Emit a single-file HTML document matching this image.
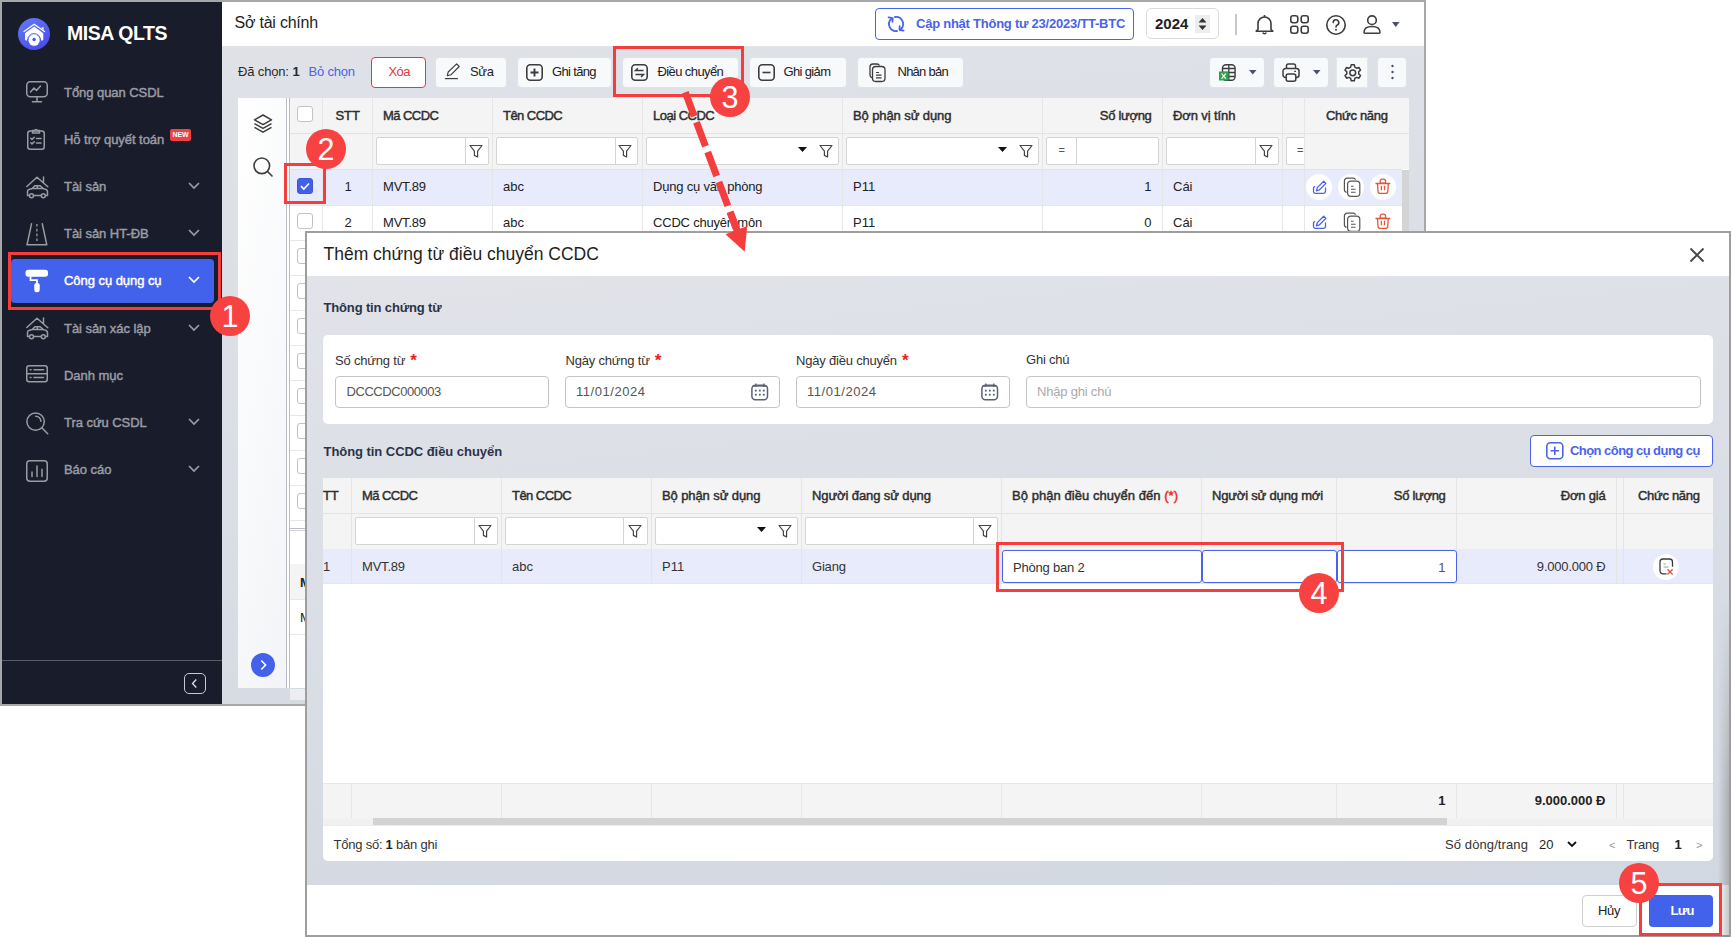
<!DOCTYPE html>
<html><head><meta charset="utf-8">
<style>
*{box-sizing:border-box;margin:0;padding:0}
html,body{width:1731px;height:937px;overflow:hidden;background:#fff;font-family:"Liberation Sans",sans-serif;color:#222}
.a{position:absolute;white-space:nowrap}
svg{position:absolute;overflow:visible}
</style></head><body>
<div class="a" style="left:0px;top:0px;width:1426px;height:706px;border:2px solid #a7a7a7;background:linear-gradient(176deg,#e0e2e8 0%,#d6dbe3 100%)"></div>
<div class="a" style="left:2px;top:2px;width:220px;height:702px;background:#191c2a"></div>
<div class="a" style="left:18px;top:18px;width:32px;height:32px;border-radius:50%;background:linear-gradient(150deg,#627df3 0%,#4844ee 100%)"></div>
<svg style="left:18px;top:18px" width="32" height="32" viewBox="0 0 32 32">
 <path d="M6 13.5 L16.2 6.3 L26.5 13.5" stroke="#fff" stroke-width="1.3" fill="none" stroke-linecap="round"/>
 <path d="M23.2 9.8 L25.3 9 L25.8 12.3Z" fill="#fff"/>
 <path d="M7 15.3 L16.2 8.6 L25.3 15.3 V22 L23.5 22.8 L22.5 20.8 A6.8 6.8 0 0 0 9.8 20.8 L8.6 22.8 L7 22Z" fill="#fff"/>
 <circle cx="16.1" cy="22" r="6.5" fill="none" stroke="#5260f0" stroke-width="0.9"/>
 <circle cx="16.1" cy="22.2" r="5.6" fill="#fff"/>
 <circle cx="16.1" cy="21.5" r="1.7" fill="#4e59f0"/>
</svg>
<div class="a" style="left:67px;top:24.49px;font-size:19.5px;line-height:19.5px;font-weight:700;color:#fff;letter-spacing:-0.45px;">MISA QLTS</div>
<div class="a" style="left:11px;top:259px;width:203px;height:44px;border-radius:4px;background:#4362ec"></div>
<div class="a" style="left:64px;top:86.00px;font-size:13px;line-height:13px;font-weight:400;color:#9a9ca4;letter-spacing:-0.05px;-webkit-text-stroke:0.45px #9a9ca4;">Tổng quan CSDL</div>
<div class="a" style="left:64px;top:133.00px;font-size:13px;line-height:13px;font-weight:400;color:#9a9ca4;letter-spacing:-0.05px;-webkit-text-stroke:0.45px #9a9ca4;">Hỗ trợ quyết toán</div>
<div class="a" style="left:64px;top:180.00px;font-size:13px;line-height:13px;font-weight:400;color:#9a9ca4;letter-spacing:-0.05px;-webkit-text-stroke:0.45px #9a9ca4;">Tài sản</div>
<svg style="left:188px;top:182px" width="12" height="7" viewBox="0 0 12 7"><path d="M1 1 L6 6 L11 1" stroke="#9a9ca4" stroke-width="1.7" fill="none"/></svg>
<div class="a" style="left:64px;top:227.00px;font-size:13px;line-height:13px;font-weight:400;color:#9a9ca4;letter-spacing:-0.05px;-webkit-text-stroke:0.45px #9a9ca4;">Tài sản HT-ĐB</div>
<svg style="left:188px;top:229px" width="12" height="7" viewBox="0 0 12 7"><path d="M1 1 L6 6 L11 1" stroke="#9a9ca4" stroke-width="1.7" fill="none"/></svg>
<div class="a" style="left:64px;top:274.00px;font-size:13px;line-height:13px;font-weight:400;color:#fff;letter-spacing:-0.05px;-webkit-text-stroke:0.45px #fff;">Công cụ dụng cụ</div>
<svg style="left:188px;top:276px" width="12" height="7" viewBox="0 0 12 7"><path d="M1 1 L6 6 L11 1" stroke="#fff" stroke-width="1.7" fill="none"/></svg>
<div class="a" style="left:64px;top:322.00px;font-size:13px;line-height:13px;font-weight:400;color:#9a9ca4;letter-spacing:-0.05px;-webkit-text-stroke:0.45px #9a9ca4;">Tài sản xác lập</div>
<svg style="left:188px;top:324px" width="12" height="7" viewBox="0 0 12 7"><path d="M1 1 L6 6 L11 1" stroke="#9a9ca4" stroke-width="1.7" fill="none"/></svg>
<div class="a" style="left:64px;top:369.00px;font-size:13px;line-height:13px;font-weight:400;color:#9a9ca4;letter-spacing:-0.05px;-webkit-text-stroke:0.45px #9a9ca4;">Danh mục</div>
<div class="a" style="left:64px;top:416.00px;font-size:13px;line-height:13px;font-weight:400;color:#9a9ca4;letter-spacing:-0.05px;-webkit-text-stroke:0.45px #9a9ca4;">Tra cứu CSDL</div>
<svg style="left:188px;top:418px" width="12" height="7" viewBox="0 0 12 7"><path d="M1 1 L6 6 L11 1" stroke="#9a9ca4" stroke-width="1.7" fill="none"/></svg>
<div class="a" style="left:64px;top:463.00px;font-size:13px;line-height:13px;font-weight:400;color:#9a9ca4;letter-spacing:-0.05px;-webkit-text-stroke:0.45px #9a9ca4;">Báo cáo</div>
<svg style="left:188px;top:465px" width="12" height="7" viewBox="0 0 12 7"><path d="M1 1 L6 6 L11 1" stroke="#9a9ca4" stroke-width="1.7" fill="none"/></svg>
<div class="a" style="left:170px;top:129px;width:21px;height:12px;background:#ec4242;border-radius:2px"></div>
<div class="a" style="left:172.5px;top:131.37px;font-size:7px;line-height:7px;font-weight:700;color:#fff;letter-spacing:-0.1px;">NEW</div>
<svg style="left:26px;top:81px" width="22" height="22" viewBox="0 0 22 22"><rect x="0.75" y="0.75" width="20.5" height="15" rx="3.5" stroke="#9a9ca4" stroke-width="1.5" fill="none" stroke-linecap="round" stroke-linejoin="round"/><path d="M11 16 V20.5 M6.5 20.8 H15.5" stroke="#9a9ca4" stroke-width="1.5" fill="none" stroke-linecap="round" stroke-linejoin="round"/><path d="M4.5 11 L8 7 L10.5 9.5 L14.5 5" stroke="#9a9ca4" stroke-width="1.5" fill="none" stroke-linecap="round" stroke-linejoin="round"/></svg>
<svg style="left:27px;top:128px" width="18" height="22" viewBox="0 0 18 22"><rect x="0.75" y="3" width="16.5" height="18.2" rx="2.5" stroke="#9a9ca4" stroke-width="1.5" fill="none" stroke-linecap="round" stroke-linejoin="round"/><path d="M5.5 5 V2.5 H7.5 A1.6 1.6 0 0 1 10.5 2.5 H12.5 V5 Z" stroke="#9a9ca4" stroke-width="1.5" fill="none" stroke-linecap="round" stroke-linejoin="round"/><path d="M3.8 10.2 L5 11.4 L7.3 9.2 M3.8 14.7 L5 15.9 L7.3 13.7 M9.5 10.5 H14 M9.5 15 H14" stroke="#9a9ca4" stroke-width="1.5" fill="none" stroke-linecap="round" stroke-linejoin="round"/></svg>
<svg style="left:25.5px;top:175.5px" width="23" height="23" viewBox="0 0 23 23"><path d="M0.8 10.5 L11 1.2 L21.8 10.8 M17.5 1 V7" stroke="#9a9ca4" stroke-width="1.5" fill="none" stroke-linecap="round" stroke-linejoin="round"/><path d="M3 19.5 H1.5 V15.5 Q1.5 13.8 3.5 13.3 L6.2 12.5 L8.8 9.8 H14.2 L17.5 12.8 Q21.5 13.3 21.5 15.8 V19.5 H19.8 M7.8 19.5 H15 M6.2 12.5 H17.5 M11.3 9.8 V12.5" stroke="#9a9ca4" stroke-width="1.5" fill="none" stroke-linecap="round" stroke-linejoin="round"/><circle cx="5.5" cy="19.8" r="2" stroke="#9a9ca4" stroke-width="1.5" fill="none" stroke-linecap="round" stroke-linejoin="round"/><circle cx="17.3" cy="19.8" r="2" stroke="#9a9ca4" stroke-width="1.5" fill="none" stroke-linecap="round" stroke-linejoin="round"/></svg>
<svg style="left:26px;top:223px" width="22" height="23" viewBox="0 0 22 23"><path d="M5.5 0.8 L1 21.8 H20.8 L16.3 0.8" stroke="#9a9ca4" stroke-width="1.5" fill="none" stroke-linecap="round" stroke-linejoin="round"/><path d="M10.9 1 V20" stroke="#9a9ca4" stroke-width="1.3" stroke-dasharray="2.6 2.2"/></svg>
<svg style="left:25px;top:269px" width="24" height="24" viewBox="0 0 24 24"><rect x="0.5" y="0.8" width="22.5" height="7" rx="2.8" fill="#fff"/><path d="M5.5 7.5 V11.2 H12 V15" stroke="#fff" stroke-width="1.8" fill="none"/><rect x="9.3" y="14" width="5.4" height="9.2" rx="2.2" fill="#fff"/></svg>
<svg style="left:25.5px;top:317px" width="23" height="23" viewBox="0 0 23 23"><path d="M0.8 10.5 L11 1.2 L21.8 10.8 M17.5 1 V7" stroke="#9a9ca4" stroke-width="1.5" fill="none" stroke-linecap="round" stroke-linejoin="round"/><path d="M3 19.5 H1.5 V15.5 Q1.5 13.8 3.5 13.3 L6.2 12.5 L8.8 9.8 H14.2 L17.5 12.8 Q21.5 13.3 21.5 15.8 V19.5 H19.8 M7.8 19.5 H15 M6.2 12.5 H17.5 M11.3 9.8 V12.5" stroke="#9a9ca4" stroke-width="1.5" fill="none" stroke-linecap="round" stroke-linejoin="round"/><circle cx="5.5" cy="19.8" r="2" stroke="#9a9ca4" stroke-width="1.5" fill="none" stroke-linecap="round" stroke-linejoin="round"/><circle cx="17.3" cy="19.8" r="2" stroke="#9a9ca4" stroke-width="1.5" fill="none" stroke-linecap="round" stroke-linejoin="round"/></svg>
<svg style="left:26px;top:365px" width="22" height="18" viewBox="0 0 22 18"><rect x="0.75" y="0.75" width="20.5" height="16" rx="2.5" stroke="#9a9ca4" stroke-width="1.5" fill="none" stroke-linecap="round" stroke-linejoin="round"/><path d="M0.8 8.7 H21.2 M4.2 4.8 H5 M8 4.8 H17.5 M4.2 12.6 H5 M8 12.6 H17.5" stroke="#9a9ca4" stroke-width="1.5" fill="none" stroke-linecap="round" stroke-linejoin="round"/></svg>
<svg style="left:26px;top:412px" width="23" height="23" viewBox="0 0 23 23"><circle cx="9.6" cy="9.6" r="8.7" stroke="#9a9ca4" stroke-width="1.5" fill="none" stroke-linecap="round" stroke-linejoin="round"/><path d="M15.8 15.8 L21.7 21.7" stroke="#9a9ca4" stroke-width="1.5" fill="none" stroke-linecap="round" stroke-linejoin="round"/><path d="M9.8 4.3 A5.3 5.3 0 0 1 14.9 9.3" stroke="#9a9ca4" stroke-width="1.5" fill="none" stroke-linecap="round" stroke-linejoin="round"/></svg>
<svg style="left:26px;top:460px" width="22" height="22" viewBox="0 0 22 22"><rect x="0.75" y="0.75" width="20.5" height="20.5" rx="3.2" stroke="#9a9ca4" stroke-width="1.5" fill="none" stroke-linecap="round" stroke-linejoin="round"/><path d="M6 16.5 V12 M11 16.5 V6 M16 16.5 V9.2" stroke="#9a9ca4" stroke-width="1.5" fill="none" stroke-linecap="round" stroke-linejoin="round"/></svg>
<div class="a" style="left:2px;top:660px;width:220px;height:1px;background:#5a5d68"></div>
<div class="a" style="left:184px;top:673px;width:22px;height:21px;border:1.5px solid #c9cad0;border-radius:5px"></div>
<svg style="left:184px;top:673px" width="22" height="21" viewBox="0 0 22 21"><path d="M12.3 6.5 L8.5 10.5 L12.3 14.5" stroke="#e4e4e8" stroke-width="1.3" fill="none"/></svg>
<div class="a" style="left:222px;top:2px;width:1202px;height:44px;background:#fff"></div>
<div class="a" style="left:234.5px;top:15.26px;font-size:16px;line-height:16px;font-weight:400;color:#1e1e1e;letter-spacing:-0.22px;">Sở tài chính</div>
<div class="a" style="left:875px;top:8px;width:259px;height:32px;border:1px solid #4a63ea;border-radius:4px;background:#fff"></div>
<svg style="left:882px;top:12px" width="28" height="24" viewBox="0 0 28 24"><path d="M15 19 A7 7 0 0 1 9.2 7" stroke="#4a63ea" stroke-width="1.8" fill="none" stroke-linecap="round"/><path d="M6.6 5.4 L10.7 6.2 L10.5 9.8" stroke="#4a63ea" stroke-width="1.8" fill="none" stroke-linecap="round" stroke-linejoin="round"/><path d="M13 5 A7 7 0 0 1 18.9 17" stroke="#4a63ea" stroke-width="1.8" fill="none" stroke-linecap="round"/><path d="M21.6 18.6 L17.6 18 L17.6 14.2" stroke="#4a63ea" stroke-width="1.8" fill="none" stroke-linecap="round" stroke-linejoin="round"/></svg>
<div class="a" style="left:916px;top:17.00px;font-size:13px;line-height:13px;font-weight:700;color:#4a63ea;letter-spacing:-0.24px;">Cập nhật Thông tư 23/2023/TT-BTC</div>
<div class="a" style="left:1146px;top:8px;width:73px;height:31px;border:1px solid #d9dbe0;border-radius:5px;background:#fff"></div>
<div class="a" style="left:1155px;top:16.30px;font-size:15px;line-height:15px;font-weight:700;color:#1e1e1e;">2024</div>
<div class="a" style="left:1195px;top:15px;width:15px;height:18px;background:#ededed"></div>
<svg style="left:1195px;top:15px" width="15" height="18" viewBox="0 0 15 18"><path d="M3.5 7.5 L7.5 3 L11.5 7.5Z M3.5 10.5 L7.5 15 L11.5 10.5Z" fill="#333"/></svg>
<div class="a" style="left:1235px;top:14px;width:1.5px;height:21px;background:#c8c8c8"></div>
<svg style="left:1255px;top:14px" width="19" height="21" viewBox="0 0 19 21"><path d="M3 15.5 V9.5 A6.5 6.5 0 0 1 16 9.5 V15.5 L17.8 17.2 H1.2 Z" stroke="#3d3d3d" stroke-width="1.6" fill="none" stroke-linejoin="round"/><path d="M7.8 18.5 A1.8 1.8 0 0 0 11.2 18.5" stroke="#3d3d3d" stroke-width="1.6" fill="none"/><path d="M9.5 1 V3" stroke="#3d3d3d" stroke-width="1.6"/></svg>
<svg style="left:1290px;top:15px" width="19" height="19" viewBox="0 0 19 19"><rect x="0.8" y="0.8" width="7" height="7" rx="2.2" stroke="#3d3d3d" stroke-width="1.6" fill="none"/><rect x="11.2" y="0.8" width="7" height="7" rx="2.2" stroke="#3d3d3d" stroke-width="1.6" fill="none"/><rect x="0.8" y="11.2" width="7" height="7" rx="2.2" stroke="#3d3d3d" stroke-width="1.6" fill="none"/><rect x="11.2" y="11.2" width="7" height="7" rx="2.2" stroke="#3d3d3d" stroke-width="1.6" fill="none"/></svg>
<svg style="left:1326px;top:14.5px" width="20" height="20" viewBox="0 0 20 20"><circle cx="10" cy="10" r="9.2" stroke="#3d3d3d" stroke-width="1.6" fill="none"/><path d="M7.2 7.6 A2.8 2.8 0 1 1 11 10.2 Q10 10.7 10 12" stroke="#3d3d3d" stroke-width="1.6" fill="none" stroke-linecap="round"/><circle cx="10" cy="14.8" r="1" fill="#3d3d3d"/></svg>
<svg style="left:1363px;top:15px" width="18" height="19" viewBox="0 0 18 19"><circle cx="9" cy="5.2" r="4.3" stroke="#3d3d3d" stroke-width="1.6" fill="none"/><path d="M1 17.2 Q1 11.5 9 11.5 Q17 11.5 17 17.2 Q17 18.2 16 18.2 H2 Q1 18.2 1 17.2Z" stroke="#3d3d3d" stroke-width="1.6" fill="none"/></svg>
<svg style="left:1392px;top:21.5px" width="8" height="5" viewBox="0 0 8 5"><path d="M0 0 H7.5 L3.75 5Z" fill="#4a5070"/></svg>
<div class="a" style="left:238px;top:65.00px;font-size:13px;line-height:13px;font-weight:400;color:#2a2a2a;letter-spacing:-0.15px;">Đã chọn: </div>
<div class="a" style="left:292.5px;top:65.00px;font-size:13px;line-height:13px;font-weight:700;color:#2a2a2a;">1</div>
<div class="a" style="left:308.5px;top:65.00px;font-size:13px;line-height:13px;font-weight:400;color:#4a63ea;letter-spacing:-0.2px;">Bỏ chọn</div>
<div class="a" style="left:371px;top:57px;width:55px;height:31px;border-radius:4px;background:#fff;border:1px solid #e33b3b"></div>
<div class="a" style="left:388.5px;top:65.00px;font-size:13px;line-height:13px;font-weight:400;color:#e03a3a;letter-spacing:-0.6px;">Xóa</div>
<div class="a" style="left:435px;top:57px;width:72px;height:31px;border-radius:4px;background:#f8f9fb;border:1px solid #dfe2e7"></div>
<svg style="left:440px;top:58px" width="24" height="24" viewBox="0 0 24 24"><path d="M7.3 17.7 L8.2 14 L16.6 5.9 L19.2 8.5 L10.9 16.8 Z" stroke="#3d3d3d" stroke-width="1.15" fill="none" stroke-linejoin="round"/><path d="M4.9 20.6 H17.9" stroke="#3d3d3d" stroke-width="1.2"/></svg>
<div class="a" style="left:470px;top:65.00px;font-size:13px;line-height:13px;font-weight:400;color:#222;letter-spacing:-0.3px;">Sửa</div>
<div class="a" style="left:517px;top:57px;width:95px;height:31px;border-radius:4px;background:#f8f9fb;border:1px solid #dfe2e7"></div>
<svg style="left:525.5px;top:63.5px" width="17" height="17" viewBox="0 0 17 17"><rect x="0.8" y="0.8" width="15.4" height="15.4" rx="3.5" stroke="#3d3d3d" stroke-width="1.6" fill="none"/><path d="M8.5 4.5 V12.5 M4.5 8.5 H12.5" stroke="#3d3d3d" stroke-width="1.9"/></svg>
<div class="a" style="left:552px;top:65.00px;font-size:13px;line-height:13px;font-weight:400;color:#222;letter-spacing:-0.65px;">Ghi tăng</div>
<div class="a" style="left:622px;top:57px;width:117px;height:31px;border-radius:4px;background:#f8f9fb;border:1px solid #dfe2e7"></div>
<svg style="left:631px;top:63.5px" width="17" height="17" viewBox="0 0 17 17"><rect x="0.8" y="0.8" width="15.4" height="15.4" rx="3.5" stroke="#3d3d3d" stroke-width="1.6" fill="none"/><path d="M12.5 6.6 H4.5 L6.9 4.2 M4.5 10.6 H12.5 L10.1 13" stroke="#3d3d3d" stroke-width="1.5" fill="none"/></svg>
<div class="a" style="left:657.5px;top:65.00px;font-size:13px;line-height:13px;font-weight:400;color:#222;letter-spacing:-0.6px;">Điều chuyển</div>
<div class="a" style="left:749px;top:57px;width:98px;height:31px;border-radius:4px;background:#f8f9fb;border:1px solid #dfe2e7"></div>
<svg style="left:757.5px;top:63.5px" width="17" height="17" viewBox="0 0 17 17"><rect x="0.8" y="0.8" width="15.4" height="15.4" rx="3.5" stroke="#3d3d3d" stroke-width="1.6" fill="none"/><path d="M4.5 8.5 H12.5" stroke="#3d3d3d" stroke-width="1.6"/></svg>
<div class="a" style="left:783.5px;top:65.00px;font-size:13px;line-height:13px;font-weight:400;color:#222;letter-spacing:-0.65px;">Ghi giảm</div>
<div class="a" style="left:857px;top:57px;width:107px;height:31px;border-radius:4px;background:#f8f9fb;border:1px solid #dfe2e7"></div>
<svg style="left:868.5px;top:62.5px" width="17" height="19" viewBox="0 0 17 19"><path d="M10.5 2.5 A3 3 0 0 0 8 1 H4 A3 3 0 0 0 1 4 V12 A3 3 0 0 0 3 14.8" stroke="#3d3d3d" stroke-width="1.3" fill="none"/><rect x="3.5" y="3.5" width="12.5" height="15" rx="3.2" stroke="#3d3d3d" stroke-width="1.3" fill="#f8f9fb"/><path d="M7 9.5 H10 M7 12.2 H12.5 M7 14.9 H12.5" stroke="#3d3d3d" stroke-width="1.2"/></svg>
<div class="a" style="left:897.5px;top:65.00px;font-size:13px;line-height:13px;font-weight:400;color:#222;letter-spacing:-0.75px;">Nhân bản</div>
<div class="a" style="left:1209px;top:57px;width:56px;height:31px;border-radius:4px;background:#f8f9fb;border:1px solid #dfe2e7"></div>
<svg style="left:1219px;top:64px" width="17" height="17" viewBox="0 0 17 17"><rect x="3.5" y="0.7" width="12.6" height="15.6" rx="3.5" stroke="#3d3d3d" stroke-width="1.4" fill="none"/><path d="M3.5 4.5 H16 M3.5 8.5 H16 M3.5 12.5 H16 M9.8 0.8 V16.2" stroke="#3d3d3d" stroke-width="1.3"/><rect x="0" y="7.5" width="9.5" height="9" fill="#2ea44f"/><path d="M2.6 9.6 L6.8 14.6 M6.8 9.6 L2.6 14.6" stroke="#fff" stroke-width="1.2"/></svg>
<svg style="left:1249px;top:70.3px" width="7.5" height="4.5" viewBox="0 0 7.5 4.5"><path d="M0 0 H7.5 L3.75 4.5Z" fill="#4a5070"/></svg>
<div class="a" style="left:1273px;top:57px;width:56px;height:31px;border-radius:4px;background:#f8f9fb;border:1px solid #dfe2e7"></div>
<svg style="left:1282px;top:63px" width="18" height="19" viewBox="0 0 18 19"><path d="M4.5 5.5 V2.8 A1.8 1.8 0 0 1 6.3 1 H11.7 A1.8 1.8 0 0 1 13.5 2.8 V5.5" stroke="#3d3d3d" stroke-width="1.5" fill="none"/><path d="M4 14.5 H3.5 A2.5 2.5 0 0 1 1 12 V8 A2.5 2.5 0 0 1 3.5 5.5 H14.5 A2.5 2.5 0 0 1 17 8 V12 A2.5 2.5 0 0 1 14.5 14.5 H14" stroke="#3d3d3d" stroke-width="1.5" fill="none"/><rect x="4.2" y="11" width="9.6" height="7.2" rx="2" stroke="#3d3d3d" stroke-width="1.5" fill="#f8f9fb"/><path d="M12.3 8.3 H14" stroke="#3d3d3d" stroke-width="1.3"/></svg>
<svg style="left:1313px;top:70.3px" width="7.5" height="4.5" viewBox="0 0 7.5 4.5"><path d="M0 0 H7.5 L3.75 4.5Z" fill="#4a5070"/></svg>
<div class="a" style="left:1336px;top:57px;width:31.5px;height:30.5px;background:#f8f9fb;border:1px solid #e4e6eb"></div>
<svg style="left:1342.5px;top:62.5px" width="19.5" height="19.5" viewBox="0 0 19.5 19.5"><path d="M8.2 1 H11.3 L11.8 3.4 L13.6 4.4 L15.9 3.6 L17.5 6.3 L15.7 7.9 V10.1 L17.5 11.7 L15.9 14.4 L13.6 13.6 L11.8 14.6 L11.3 17 H8.2 L7.7 14.6 L5.9 13.6 L3.6 14.4 L2 11.7 L3.8 10.1 V7.9 L2 6.3 L3.6 3.6 L5.9 4.4 L7.7 3.4 Z" transform="translate(0,0.8)" stroke="#3d3d3d" stroke-width="1.5" fill="none" stroke-linejoin="round"/><circle cx="9.75" cy="9.8" r="2.9" stroke="#3d3d3d" stroke-width="1.5" fill="none"/></svg>
<div class="a" style="left:1377px;top:57px;width:30px;height:31px;border-radius:4px;background:#f8f9fb;border:1px solid #dfe2e7"></div>
<svg style="left:1390.5px;top:64px" width="3" height="16" viewBox="0 0 3 16"><circle cx="1.5" cy="2" r="1.2" fill="#4a5070"/><circle cx="1.5" cy="8" r="1.2" fill="#4a5070"/><circle cx="1.5" cy="14" r="1.2" fill="#4a5070"/></svg>
<div class="a" style="left:238px;top:98px;width:48px;height:590px;background:linear-gradient(100deg,#ffffff 0%,#f2f4f7 100%)"></div>
<svg style="left:253px;top:113.5px" width="20" height="20" viewBox="0 0 20 20"><path d="M10 1 L18.5 5.8 L10 10.6 L1.5 5.8 Z" stroke="#3d3d3d" stroke-width="1.5" fill="none" stroke-linejoin="round"/><path d="M1.5 9.6 L10 14.4 L18.5 9.6 M1.5 13.4 L10 18.2 L18.5 13.4" stroke="#3d3d3d" stroke-width="1.5" fill="none" stroke-linejoin="round"/></svg>
<svg style="left:253px;top:157px" width="20" height="20" viewBox="0 0 20 20"><circle cx="8.8" cy="8.8" r="7.8" stroke="#3d3d3d" stroke-width="1.6" fill="none"/><path d="M14.5 14.5 L19 19" stroke="#3d3d3d" stroke-width="1.6" stroke-linecap="round"/></svg>
<div class="a" style="left:251px;top:653px;width:24px;height:24px;border-radius:50%;background:#4461ec"></div>
<svg style="left:251px;top:653px" width="24" height="24" viewBox="0 0 24 24"><path d="M10.3 7.5 L14.6 12 L10.3 16.5" stroke="#fff" stroke-width="1.6" fill="none"/></svg>
<div class="a" style="left:286px;top:98px;width:4px;height:590px;background:#fff"></div>
<div class="a" style="left:286px;top:98px;width:1px;height:590px;background:#b9bcc2"></div>
<div class="a" style="left:289px;top:98px;width:1px;height:590px;background:#b9bcc2"></div>
<div class="a" style="left:290px;top:98px;width:1119px;height:590px;background:#fff"></div>
<div class="a" style="left:290px;top:98px;width:1119px;height:71px;background:#f4f4f4"></div>
<div class="a" style="left:290px;top:133px;width:1119px;height:1px;background:#e3e3e3"></div>
<div class="a" style="left:290px;top:169px;width:1112px;height:1px;background:#e3e3e3"></div>
<div class="a" style="left:290px;top:170px;width:1112px;height:35px;background:#e8ebfb"></div>
<div class="a" style="left:290px;top:205px;width:1112px;height:1px;background:#e6e6e6"></div>
<div class="a" style="left:290px;top:240px;width:1112px;height:1px;background:#e6e6e6"></div>
<div class="a" style="left:290px;top:275px;width:1112px;height:1px;background:#e6e6e6"></div>
<div class="a" style="left:290px;top:310px;width:1112px;height:1px;background:#e6e6e6"></div>
<div class="a" style="left:290px;top:345px;width:1112px;height:1px;background:#e6e6e6"></div>
<div class="a" style="left:290px;top:380px;width:1112px;height:1px;background:#e6e6e6"></div>
<div class="a" style="left:290px;top:415px;width:1112px;height:1px;background:#e6e6e6"></div>
<div class="a" style="left:290px;top:450px;width:1112px;height:1px;background:#e6e6e6"></div>
<div class="a" style="left:290px;top:485px;width:1112px;height:1px;background:#e6e6e6"></div>
<div class="a" style="left:290px;top:520px;width:1112px;height:1px;background:#e6e6e6"></div>
<div class="a" style="left:322px;top:98px;width:1px;height:422px;background:#e6e6e6"></div>
<div class="a" style="left:372px;top:98px;width:1px;height:422px;background:#e6e6e6"></div>
<div class="a" style="left:492px;top:98px;width:1px;height:422px;background:#e6e6e6"></div>
<div class="a" style="left:642px;top:98px;width:1px;height:422px;background:#e6e6e6"></div>
<div class="a" style="left:842px;top:98px;width:1px;height:422px;background:#e6e6e6"></div>
<div class="a" style="left:1042px;top:98px;width:1px;height:422px;background:#e6e6e6"></div>
<div class="a" style="left:1162px;top:98px;width:1px;height:422px;background:#e6e6e6"></div>
<div class="a" style="left:1282px;top:98px;width:1px;height:422px;background:#e6e6e6"></div>
<div class="a" style="left:1304px;top:98px;width:1px;height:422px;background:#e6e6e6"></div>
<div class="a" style="left:1402px;top:170px;width:7px;height:70px;background:#d4d4d4"></div>
<div class="a" style="left:290px;top:528px;width:1118px;height:1px;background:#b9bcc2"></div>
<div class="a" style="left:290px;top:530px;width:1118px;height:1px;background:#d0d2d6"></div>
<div class="a" style="left:290px;top:564px;width:1118px;height:36px;background:#f4f4f4"></div>
<div class="a" style="left:290px;top:599px;width:1118px;height:1px;background:#e6e6e6"></div>
<div class="a" style="left:290px;top:634px;width:1118px;height:1px;background:#e6e6e6"></div>
<div class="a" style="left:300px;top:576.00px;font-size:13px;line-height:13px;font-weight:700;color:#222;">M</div>
<div class="a" style="left:300px;top:611.00px;font-size:13px;line-height:13px;font-weight:400;color:#222;">M</div>
<div class="a" style="left:290px;top:688px;width:1118px;height:16px;background:#d5d9e0"></div>
<div class="a" style="left:290px;top:689px;width:1118px;height:11px;background:#eceef1"></div>
<div class="a" style="left:297px;top:106px;width:16px;height:16px;border:1px solid #c2c2c2;border-radius:3px;background:#fff"></div>
<div class="a" style="left:335.5px;top:109.00px;font-size:13px;line-height:13px;font-weight:400;color:#2e2e2e;letter-spacing:-0.1px;-webkit-text-stroke:0.45px #2e2e2e;">STT</div>
<div class="a" style="left:383px;top:109.00px;font-size:13px;line-height:13px;font-weight:400;color:#2e2e2e;letter-spacing:-0.55px;-webkit-text-stroke:0.45px #2e2e2e;">Mã CCDC</div>
<div class="a" style="left:503px;top:109.00px;font-size:13px;line-height:13px;font-weight:400;color:#2e2e2e;letter-spacing:-0.55px;-webkit-text-stroke:0.45px #2e2e2e;">Tên CCDC</div>
<div class="a" style="left:653px;top:109.00px;font-size:13px;line-height:13px;font-weight:400;color:#2e2e2e;letter-spacing:-0.5px;-webkit-text-stroke:0.45px #2e2e2e;">Loại CCDC</div>
<div class="a" style="left:853px;top:109.00px;font-size:13px;line-height:13px;font-weight:400;color:#2e2e2e;letter-spacing:-0.1px;-webkit-text-stroke:0.45px #2e2e2e;">Bộ phận sử dụng</div>
<div class="a" style="right:579.5px;top:109.00px;font-size:13px;line-height:13px;font-weight:400;color:#2e2e2e;letter-spacing:-0.3px;-webkit-text-stroke:0.45px #2e2e2e;">Số lượng</div>
<div class="a" style="left:1173px;top:109.00px;font-size:13px;line-height:13px;font-weight:400;color:#2e2e2e;letter-spacing:-0.1px;-webkit-text-stroke:0.45px #2e2e2e;">Đơn vị tính</div>
<div class="a" style="left:1326px;top:109.00px;font-size:13px;line-height:13px;font-weight:400;color:#2e2e2e;letter-spacing:-0.3px;-webkit-text-stroke:0.45px #2e2e2e;">Chức năng</div>
<div class="a" style="left:376px;top:137px;width:113px;height:28px;background:#fff;border:1px solid #d4d4d4;border-radius:2px"></div>
<div class="a" style="left:464.5px;top:137px;width:1px;height:28px;background:#d4d4d4"></div>
<svg style="left:469px;top:144px" width="14" height="14" viewBox="0 0 14 14"><path d="M1 1.5 H13 L8.6 7.2 V13 L5.4 11.4 V7.2 Z" stroke="#444" stroke-width="1.2" fill="none" stroke-linejoin="round"/></svg>
<div class="a" style="left:496px;top:137px;width:142px;height:28px;background:#fff;border:1px solid #d4d4d4;border-radius:2px"></div>
<div class="a" style="left:614.5px;top:137px;width:1px;height:28px;background:#d4d4d4"></div>
<svg style="left:618px;top:144px" width="14" height="14" viewBox="0 0 14 14"><path d="M1 1.5 H13 L8.6 7.2 V13 L5.4 11.4 V7.2 Z" stroke="#444" stroke-width="1.2" fill="none" stroke-linejoin="round"/></svg>
<div class="a" style="left:646px;top:137px;width:193px;height:28px;background:#fff;border:1px solid #d4d4d4;border-radius:2px"></div>
<svg style="left:819px;top:144px" width="14" height="14" viewBox="0 0 14 14"><path d="M1 1.5 H13 L8.6 7.2 V13 L5.4 11.4 V7.2 Z" stroke="#444" stroke-width="1.2" fill="none" stroke-linejoin="round"/></svg>
<svg style="left:798px;top:147px" width="9" height="5" viewBox="0 0 9 5"><path d="M0 0 H9 L4.5 5Z" fill="#111"/></svg>
<div class="a" style="left:846px;top:137px;width:193px;height:28px;background:#fff;border:1px solid #d4d4d4;border-radius:2px"></div>
<svg style="left:1019px;top:144px" width="14" height="14" viewBox="0 0 14 14"><path d="M1 1.5 H13 L8.6 7.2 V13 L5.4 11.4 V7.2 Z" stroke="#444" stroke-width="1.2" fill="none" stroke-linejoin="round"/></svg>
<svg style="left:998px;top:147px" width="9" height="5" viewBox="0 0 9 5"><path d="M0 0 H9 L4.5 5Z" fill="#111"/></svg>
<div class="a" style="left:1046px;top:137px;width:113px;height:28px;background:#fff;border:1px solid #d4d4d4;border-radius:2px"></div>
<div class="a" style="left:1076px;top:137px;width:1px;height:28px;background:#d4d4d4"></div>
<div class="a" style="left:1058.5px;top:144.69px;font-size:11px;line-height:11px;font-weight:400;color:#555;">=</div>
<div class="a" style="left:1166px;top:137px;width:113px;height:28px;background:#fff;border:1px solid #d4d4d4;border-radius:2px"></div>
<div class="a" style="left:1254.5px;top:137px;width:1px;height:28px;background:#d4d4d4"></div>
<svg style="left:1259px;top:144px" width="14" height="14" viewBox="0 0 14 14"><path d="M1 1.5 H13 L8.6 7.2 V13 L5.4 11.4 V7.2 Z" stroke="#444" stroke-width="1.2" fill="none" stroke-linejoin="round"/></svg>
<div class="a" style="left:1286px;top:137px;width:19px;height:28px;background:#fff;border:1px solid #d4d4d4;border-right:none;border-radius:2px 0 0 2px"></div>
<div class="a" style="left:1297px;top:144.69px;font-size:11px;line-height:11px;font-weight:400;color:#555;">=</div>
<div class="a" style="left:1304px;top:134px;width:105px;height:35px;background:#f4f4f4"></div>
<div class="a" style="left:1304px;top:98px;width:1px;height:422px;background:#e6e6e6"></div>
<div class="a" style="left:297px;top:177.5px;width:16px;height:16px;border-radius:3px;background:#4261ea;border:1px solid #3a57d8"></div>
<svg style="left:297px;top:177.5px" width="16" height="16" viewBox="0 0 16 16"><path d="M4 8.2 L6.8 11 L12 5.5" stroke="#fff" stroke-width="1.7" fill="none"/></svg>
<div class="a" style="left:344.5px;top:180.00px;font-size:13px;line-height:13px;font-weight:400;color:#222;">1</div>
<div class="a" style="left:383px;top:180.00px;font-size:13px;line-height:13px;font-weight:400;color:#222;letter-spacing:-0.2px;">MVT.89</div>
<div class="a" style="left:503px;top:180.00px;font-size:13px;line-height:13px;font-weight:400;color:#222;">abc</div>
<div class="a" style="left:653px;top:180.00px;font-size:13px;line-height:13px;font-weight:400;color:#222;letter-spacing:-0.2px;">Dụng cụ văn phòng</div>
<div class="a" style="left:853px;top:180.00px;font-size:13px;line-height:13px;font-weight:400;color:#222;">P11</div>
<div class="a" style="right:579.5px;top:180.00px;font-size:13px;line-height:13px;font-weight:400;color:#222;">1</div>
<div class="a" style="left:1173px;top:180.00px;font-size:13px;line-height:13px;font-weight:400;color:#222;">Cái</div>
<div class="a" style="left:344.5px;top:215.50px;font-size:13px;line-height:13px;font-weight:400;color:#222;">2</div>
<div class="a" style="left:383px;top:215.50px;font-size:13px;line-height:13px;font-weight:400;color:#222;letter-spacing:-0.2px;">MVT.89</div>
<div class="a" style="left:503px;top:215.50px;font-size:13px;line-height:13px;font-weight:400;color:#222;">abc</div>
<div class="a" style="left:653px;top:215.50px;font-size:13px;line-height:13px;font-weight:400;color:#222;letter-spacing:-0.2px;">CCDC chuyên môn</div>
<div class="a" style="left:853px;top:215.50px;font-size:13px;line-height:13px;font-weight:400;color:#222;">P11</div>
<div class="a" style="right:579.5px;top:215.50px;font-size:13px;line-height:13px;font-weight:400;color:#222;">0</div>
<div class="a" style="left:1173px;top:215.50px;font-size:13px;line-height:13px;font-weight:400;color:#222;">Cái</div>
<div class="a" style="left:1306px;top:174px;width:26px;height:26px;border-radius:50%;background:#fff"></div>
<div class="a" style="left:1338px;top:174px;width:26px;height:26px;border-radius:50%;background:#fff"></div>
<div class="a" style="left:1370px;top:174px;width:26px;height:26px;border-radius:50%;background:#fff"></div>
<svg style="left:1311px;top:178px" width="17" height="17" viewBox="0 0 17 17"><path d="M2.5 10.2 Q2.5 9 3.6 8.6 M2.5 10 V13.6 A1.8 1.8 0 0 0 4.3 15.4 H12.7 A1.8 1.8 0 0 0 14.5 13.6 V9.8" stroke="#4a63ea" stroke-width="1.3" fill="none" stroke-linecap="round"/><path d="M5.4 12.9 L6.3 9.6 L12.7 3.2 L14.9 5.4 L8.5 11.8 Z" stroke="#4a63ea" stroke-width="1.3" fill="none" stroke-linejoin="round"/></svg>
<svg style="left:1343px;top:176.5px" width="18" height="20" viewBox="0 0 18 20"><path d="M12.6 2.6 A2.8 2.8 0 0 0 10.2 1.2 H4.2 A2.8 2.8 0 0 0 1.4 4 V12.6 A2.8 2.8 0 0 0 3.6 15.4" stroke="#555" stroke-width="1.2" fill="none"/><rect x="4.6" y="4.1" width="12.2" height="15.3" rx="3.2" stroke="#555" stroke-width="1.2" fill="#fff"/><path d="M8 9.2 H10.6 M8 12.2 H12.6 M8 15.2 H12.6" stroke="#555" stroke-width="1.1"/></svg>
<svg style="left:1375px;top:177px" width="16" height="17" viewBox="0 0 16 17"><path d="M1 6.5 H14.8" stroke="#e4553a" stroke-width="1.3" fill="none" stroke-linecap="round"/><path d="M5.2 6.2 V4.2 A2 2 0 0 1 7.2 2.2 H8.6 A2 2 0 0 1 10.6 4.2 V6.2 Z" stroke="#e4553a" stroke-width="1.3" fill="none"/><path d="M2.5 6.8 L3 14.3 A2.4 2.4 0 0 0 5.4 16.4 H10.4 A2.4 2.4 0 0 0 12.8 14.3 L13.3 6.8" stroke="#e4553a" stroke-width="1.3" fill="none"/><path d="M6.4 8.8 V13.2 M9.5 8.8 V13.2" stroke="#e4553a" stroke-width="1.3"/></svg>
<svg style="left:1311px;top:213px" width="17" height="17" viewBox="0 0 17 17"><path d="M2.5 10.2 Q2.5 9 3.6 8.6 M2.5 10 V13.6 A1.8 1.8 0 0 0 4.3 15.4 H12.7 A1.8 1.8 0 0 0 14.5 13.6 V9.8" stroke="#4a63ea" stroke-width="1.3" fill="none" stroke-linecap="round"/><path d="M5.4 12.9 L6.3 9.6 L12.7 3.2 L14.9 5.4 L8.5 11.8 Z" stroke="#4a63ea" stroke-width="1.3" fill="none" stroke-linejoin="round"/></svg>
<svg style="left:1343px;top:211.5px" width="18" height="20" viewBox="0 0 18 20"><path d="M12.6 2.6 A2.8 2.8 0 0 0 10.2 1.2 H4.2 A2.8 2.8 0 0 0 1.4 4 V12.6 A2.8 2.8 0 0 0 3.6 15.4" stroke="#555" stroke-width="1.2" fill="none"/><rect x="4.6" y="4.1" width="12.2" height="15.3" rx="3.2" stroke="#555" stroke-width="1.2" fill="#fff"/><path d="M8 9.2 H10.6 M8 12.2 H12.6 M8 15.2 H12.6" stroke="#555" stroke-width="1.1"/></svg>
<svg style="left:1375px;top:212px" width="16" height="17" viewBox="0 0 16 17"><path d="M1 6.5 H14.8" stroke="#e4553a" stroke-width="1.3" fill="none" stroke-linecap="round"/><path d="M5.2 6.2 V4.2 A2 2 0 0 1 7.2 2.2 H8.6 A2 2 0 0 1 10.6 4.2 V6.2 Z" stroke="#e4553a" stroke-width="1.3" fill="none"/><path d="M2.5 6.8 L3 14.3 A2.4 2.4 0 0 0 5.4 16.4 H10.4 A2.4 2.4 0 0 0 12.8 14.3 L13.3 6.8" stroke="#e4553a" stroke-width="1.3" fill="none"/><path d="M6.4 8.8 V13.2 M9.5 8.8 V13.2" stroke="#e4553a" stroke-width="1.3"/></svg>
<div class="a" style="left:297px;top:212.5px;width:16px;height:16px;border:1px solid #c2c2c2;border-radius:3px;background:#fff"></div>
<div class="a" style="left:297px;top:247.5px;width:16px;height:16px;border:1px solid #c2c2c2;border-radius:3px;background:#fff"></div>
<div class="a" style="left:297px;top:282.5px;width:16px;height:16px;border:1px solid #c2c2c2;border-radius:3px;background:#fff"></div>
<div class="a" style="left:297px;top:317.5px;width:16px;height:16px;border:1px solid #c2c2c2;border-radius:3px;background:#fff"></div>
<div class="a" style="left:297px;top:352.5px;width:16px;height:16px;border:1px solid #c2c2c2;border-radius:3px;background:#fff"></div>
<div class="a" style="left:297px;top:387.5px;width:16px;height:16px;border:1px solid #c2c2c2;border-radius:3px;background:#fff"></div>
<div class="a" style="left:297px;top:422.5px;width:16px;height:16px;border:1px solid #c2c2c2;border-radius:3px;background:#fff"></div>
<div class="a" style="left:297px;top:457.5px;width:16px;height:16px;border:1px solid #c2c2c2;border-radius:3px;background:#fff"></div>
<div class="a" style="left:297px;top:492.5px;width:16px;height:16px;border:1px solid #c2c2c2;border-radius:3px;background:#fff"></div>
<div class="a" style="left:305px;top:231px;width:1426px;height:706px;border:2px solid #9e9e9e;background:#fff"></div>
<div class="a" style="left:307px;top:276px;width:1422px;height:1px;background:#e2e4e8"></div>
<div class="a" style="left:307px;top:277px;width:1422px;height:608px;background:linear-gradient(174deg,#e1e3e9 0%,#dcdfe6 35%,#d2d8e1 100%)"></div>
<div class="a" style="left:323.5px;top:246.19px;font-size:17.5px;line-height:17.5px;font-weight:400;color:#1e1e1e;">Thêm chứng từ điều chuyển CCDC</div>
<svg style="left:1689px;top:247px" width="16" height="16" viewBox="0 0 16 16"><path d="M1.5 1.5 L14.5 14.5 M14.5 1.5 L1.5 14.5" stroke="#474747" stroke-width="1.9" fill="none"/></svg>
<div class="a" style="left:323.5px;top:301.00px;font-size:13px;line-height:13px;font-weight:700;color:#2a3347;letter-spacing:-0.15px;">Thông tin chứng từ</div>
<div class="a" style="left:323px;top:335px;width:1390px;height:89px;background:#fff;border-radius:5px"></div>
<div class="a" style="left:335px;top:353.00px;font-size:13px;line-height:13px;font-weight:400;color:#333;letter-spacing:-0.2px;">Số chứng từ<span style="color:#ee1c1c;margin-left:5px;font-size:17px;font-weight:700;position:relative;top:1px">*</span></div>
<div class="a" style="left:565.5px;top:353.00px;font-size:13px;line-height:13px;font-weight:400;color:#333;letter-spacing:-0.2px;">Ngày chứng từ<span style="color:#ee1c1c;margin-left:5px;font-size:17px;font-weight:700;position:relative;top:1px">*</span></div>
<div class="a" style="left:796px;top:353.00px;font-size:13px;line-height:13px;font-weight:400;color:#333;letter-spacing:-0.2px;">Ngày điều chuyển<span style="color:#ee1c1c;margin-left:5px;font-size:17px;font-weight:700;position:relative;top:1px">*</span></div>
<div class="a" style="left:1026px;top:353.00px;font-size:13px;line-height:13px;font-weight:400;color:#333;letter-spacing:-0.2px;">Ghi chú</div>
<div class="a" style="left:335px;top:376px;width:214px;height:32px;border:1px solid #c4c4c4;border-radius:4px;background:#fff"></div>
<div class="a" style="left:346.5px;top:385.00px;font-size:13px;line-height:13px;font-weight:400;color:#555;letter-spacing:-0.45px;">DCCCDC000003</div>
<div class="a" style="left:565px;top:376px;width:215px;height:32px;border:1px solid #c4c4c4;border-radius:4px;background:#fff"></div>
<div class="a" style="left:576px;top:385.00px;font-size:13px;line-height:13px;font-weight:400;color:#555;letter-spacing:0.55px;">11/01/2024</div>
<svg style="left:751px;top:383px" width="18" height="18" viewBox="0 0 18 18"><rect x="0.9" y="2.2" width="15.6" height="14.6" rx="3.5" stroke="#5a6175" stroke-width="1.5" fill="none"/><path d="M4.8 0.6 V4 M12.8 0.6 V4" stroke="#5a6175" stroke-width="1.3"/><path d="M1 3.2 H16.4" stroke="#5a6175" stroke-width="1"/><rect x="3.9" y="6.699999999999999" width="1.8" height="1.8" fill="#5a6175"/><rect x="3.9" y="10.799999999999999" width="1.8" height="1.8" fill="#5a6175"/><rect x="7.9" y="6.699999999999999" width="1.8" height="1.8" fill="#5a6175"/><rect x="7.9" y="10.799999999999999" width="1.8" height="1.8" fill="#5a6175"/><rect x="11.9" y="6.699999999999999" width="1.8" height="1.8" fill="#5a6175"/><rect x="11.9" y="10.799999999999999" width="1.8" height="1.8" fill="#5a6175"/></svg>
<div class="a" style="left:796px;top:376px;width:214px;height:32px;border:1px solid #c4c4c4;border-radius:4px;background:#fff"></div>
<div class="a" style="left:807px;top:385.00px;font-size:13px;line-height:13px;font-weight:400;color:#555;letter-spacing:0.55px;">11/01/2024</div>
<svg style="left:981px;top:383px" width="18" height="18" viewBox="0 0 18 18"><rect x="0.9" y="2.2" width="15.6" height="14.6" rx="3.5" stroke="#5a6175" stroke-width="1.5" fill="none"/><path d="M4.8 0.6 V4 M12.8 0.6 V4" stroke="#5a6175" stroke-width="1.3"/><path d="M1 3.2 H16.4" stroke="#5a6175" stroke-width="1"/><rect x="3.9" y="6.699999999999999" width="1.8" height="1.8" fill="#5a6175"/><rect x="3.9" y="10.799999999999999" width="1.8" height="1.8" fill="#5a6175"/><rect x="7.9" y="6.699999999999999" width="1.8" height="1.8" fill="#5a6175"/><rect x="7.9" y="10.799999999999999" width="1.8" height="1.8" fill="#5a6175"/><rect x="11.9" y="6.699999999999999" width="1.8" height="1.8" fill="#5a6175"/><rect x="11.9" y="10.799999999999999" width="1.8" height="1.8" fill="#5a6175"/></svg>
<div class="a" style="left:1026px;top:376px;width:675px;height:32px;border:1px solid #c4c4c4;border-radius:4px;background:#fff"></div>
<div class="a" style="left:1037px;top:385.00px;font-size:13px;line-height:13px;font-weight:400;color:#aaaaaa;letter-spacing:-0.2px;">Nhập ghi chú</div>
<div class="a" style="left:323.5px;top:445.00px;font-size:13px;line-height:13px;font-weight:700;color:#2a3347;letter-spacing:-0.05px;">Thông tin CCDC điều chuyển</div>
<div class="a" style="left:1530px;top:435px;width:183px;height:31.5px;border:1px solid #4a63ea;border-radius:4px;background:#fff"></div>
<svg style="left:1546px;top:442px" width="18" height="18" viewBox="0 0 18 18"><rect x="0.8" y="0.8" width="16" height="16" rx="3.5" stroke="#4a63ea" stroke-width="1.6" fill="none"/><path d="M8.8 4.5 V13.1 M4.5 8.8 H13.1" stroke="#4a63ea" stroke-width="1.6"/></svg>
<div class="a" style="left:1570px;top:444.00px;font-size:13px;line-height:13px;font-weight:700;color:#4a63ea;letter-spacing:-0.55px;">Chọn công cụ dụng cụ</div>
<div class="a" style="left:323px;top:478px;width:1390px;height:383px;background:#fff;border-radius:0 0 5px 5px"></div>
<div class="a" style="left:323px;top:478px;width:1390px;height:71px;background:#f4f4f4"></div>
<div class="a" style="left:323px;top:513px;width:1390px;height:1px;background:#e3e3e3"></div>
<div class="a" style="left:323px;top:549px;width:1390px;height:1px;background:#e3e3e3"></div>
<div class="a" style="left:323px;top:549px;width:1390px;height:35px;background:#e8ebfb"></div>
<div class="a" style="left:323px;top:583px;width:1390px;height:1px;background:#e6e6e6"></div>
<div class="a" style="left:351px;top:478px;width:1px;height:106px;background:#e4e4e4"></div>
<div class="a" style="left:501px;top:478px;width:1px;height:106px;background:#e4e4e4"></div>
<div class="a" style="left:651px;top:478px;width:1px;height:106px;background:#e4e4e4"></div>
<div class="a" style="left:801px;top:478px;width:1px;height:106px;background:#e4e4e4"></div>
<div class="a" style="left:1001px;top:478px;width:1px;height:106px;background:#e4e4e4"></div>
<div class="a" style="left:1201px;top:478px;width:1px;height:106px;background:#e4e4e4"></div>
<div class="a" style="left:1336px;top:478px;width:1px;height:106px;background:#e4e4e4"></div>
<div class="a" style="left:1456px;top:478px;width:1px;height:106px;background:#e4e4e4"></div>
<div class="a" style="left:1616px;top:478px;width:1px;height:106px;background:#e4e4e4"></div>
<div class="a" style="left:1623px;top:478px;width:1px;height:106px;background:#e4e4e4"></div>
<div class="a" style="left:323px;top:783px;width:1390px;height:35px;background:#f4f4f4"></div>
<div class="a" style="left:323px;top:783px;width:1390px;height:1px;background:#e6e6e6"></div>
<div class="a" style="left:351px;top:783px;width:1px;height:35px;background:#e6e6e6"></div>
<div class="a" style="left:501px;top:783px;width:1px;height:35px;background:#e6e6e6"></div>
<div class="a" style="left:651px;top:783px;width:1px;height:35px;background:#e6e6e6"></div>
<div class="a" style="left:801px;top:783px;width:1px;height:35px;background:#e6e6e6"></div>
<div class="a" style="left:1001px;top:783px;width:1px;height:35px;background:#e6e6e6"></div>
<div class="a" style="left:1201px;top:783px;width:1px;height:35px;background:#e6e6e6"></div>
<div class="a" style="left:1336px;top:783px;width:1px;height:35px;background:#e6e6e6"></div>
<div class="a" style="left:1456px;top:783px;width:1px;height:35px;background:#e6e6e6"></div>
<div class="a" style="left:1616px;top:783px;width:1px;height:35px;background:#e6e6e6"></div>
<div class="a" style="left:1623px;top:783px;width:1px;height:35px;background:#e6e6e6"></div>
<div class="a" style="left:323px;top:818px;width:1390px;height:7px;background:#f1f1f1"></div>
<div class="a" style="left:373px;top:818px;width:1074px;height:7px;background:#d3d3d3"></div>
<div class="a" style="left:323px;top:825px;width:1390px;height:1px;background:#ececec"></div>
<div class="a" style="left:323px;top:489.00px;font-size:13px;line-height:13px;font-weight:400;color:#2e2e2e;letter-spacing:-0.1px;-webkit-text-stroke:0.45px #2e2e2e;">TT</div>
<div class="a" style="left:362px;top:489.00px;font-size:13px;line-height:13px;font-weight:400;color:#2e2e2e;letter-spacing:-0.55px;-webkit-text-stroke:0.45px #2e2e2e;">Mã CCDC</div>
<div class="a" style="left:512px;top:489.00px;font-size:13px;line-height:13px;font-weight:400;color:#2e2e2e;letter-spacing:-0.55px;-webkit-text-stroke:0.45px #2e2e2e;">Tên CCDC</div>
<div class="a" style="left:662px;top:489.00px;font-size:13px;line-height:13px;font-weight:400;color:#2e2e2e;letter-spacing:-0.1px;-webkit-text-stroke:0.45px #2e2e2e;">Bộ phận sử dụng</div>
<div class="a" style="left:812px;top:489.00px;font-size:13px;line-height:13px;font-weight:400;color:#2e2e2e;letter-spacing:-0.1px;-webkit-text-stroke:0.45px #2e2e2e;">Người đang sử dụng</div>
<div class="a" style="left:1012px;top:489.00px;font-size:13px;line-height:13px;font-weight:400;color:#2e2e2e;letter-spacing:0.05px;-webkit-text-stroke:0.45px #2e2e2e;">Bộ phận điều chuyển đến <span style="color:#e8282b;letter-spacing:0;-webkit-text-stroke:0.45px #e8282b">(*)</span></div>
<div class="a" style="left:1212px;top:489.00px;font-size:13px;line-height:13px;font-weight:400;color:#2e2e2e;letter-spacing:-0.18px;-webkit-text-stroke:0.45px #2e2e2e;">Người sử dụng mới</div>
<div class="a" style="right:285.5px;top:489.00px;font-size:13px;line-height:13px;font-weight:400;color:#2e2e2e;letter-spacing:-0.3px;-webkit-text-stroke:0.45px #2e2e2e;">Số lượng</div>
<div class="a" style="right:125.5px;top:489.00px;font-size:13px;line-height:13px;font-weight:400;color:#2e2e2e;letter-spacing:-0.2px;-webkit-text-stroke:0.45px #2e2e2e;">Đơn giá</div>
<div class="a" style="left:1638px;top:489.00px;font-size:13px;line-height:13px;font-weight:400;color:#2e2e2e;letter-spacing:-0.3px;-webkit-text-stroke:0.45px #2e2e2e;">Chức năng</div>
<div class="a" style="left:355px;top:517px;width:143px;height:28px;background:#fff;border:1px solid #d4d4d4;border-radius:2px"></div>
<div class="a" style="left:474px;top:517px;width:1px;height:28px;background:#d4d4d4"></div>
<svg style="left:478px;top:524px" width="14" height="14" viewBox="0 0 14 14"><path d="M1 1.5 H13 L8.6 7.2 V13 L5.4 11.4 V7.2 Z" stroke="#444" stroke-width="1.2" fill="none" stroke-linejoin="round"/></svg>
<div class="a" style="left:505px;top:517px;width:143px;height:28px;background:#fff;border:1px solid #d4d4d4;border-radius:2px"></div>
<div class="a" style="left:623px;top:517px;width:1px;height:28px;background:#d4d4d4"></div>
<svg style="left:628px;top:524px" width="14" height="14" viewBox="0 0 14 14"><path d="M1 1.5 H13 L8.6 7.2 V13 L5.4 11.4 V7.2 Z" stroke="#444" stroke-width="1.2" fill="none" stroke-linejoin="round"/></svg>
<div class="a" style="left:655px;top:517px;width:143px;height:28px;background:#fff;border:1px solid #d4d4d4;border-radius:2px"></div>
<svg style="left:778px;top:524px" width="14" height="14" viewBox="0 0 14 14"><path d="M1 1.5 H13 L8.6 7.2 V13 L5.4 11.4 V7.2 Z" stroke="#444" stroke-width="1.2" fill="none" stroke-linejoin="round"/></svg>
<svg style="left:757px;top:527px" width="9" height="5" viewBox="0 0 9 5"><path d="M0 0 H9 L4.5 5Z" fill="#111"/></svg>
<div class="a" style="left:805px;top:517px;width:193px;height:28px;background:#fff;border:1px solid #d4d4d4;border-radius:2px"></div>
<div class="a" style="left:973px;top:517px;width:1px;height:28px;background:#d4d4d4"></div>
<svg style="left:978px;top:524px" width="14" height="14" viewBox="0 0 14 14"><path d="M1 1.5 H13 L8.6 7.2 V13 L5.4 11.4 V7.2 Z" stroke="#444" stroke-width="1.2" fill="none" stroke-linejoin="round"/></svg>
<div class="a" style="left:323px;top:560.00px;font-size:13px;line-height:13px;font-weight:400;color:#333;">1</div>
<div class="a" style="left:362px;top:560.00px;font-size:13px;line-height:13px;font-weight:400;color:#333;letter-spacing:-0.2px;">MVT.89</div>
<div class="a" style="left:512px;top:560.00px;font-size:13px;line-height:13px;font-weight:400;color:#333;">abc</div>
<div class="a" style="left:662px;top:560.00px;font-size:13px;line-height:13px;font-weight:400;color:#333;">P11</div>
<div class="a" style="left:812px;top:560.00px;font-size:13px;line-height:13px;font-weight:400;color:#333;letter-spacing:-0.2px;">Giang</div>
<div class="a" style="left:1002px;top:549.5px;width:200px;height:33px;border:1px solid #4a63ea;border-radius:3px;background:#fff"></div>
<div class="a" style="left:1013px;top:561.00px;font-size:13px;line-height:13px;font-weight:400;color:#333;letter-spacing:-0.2px;">Phòng ban 2</div>
<div class="a" style="left:1202px;top:549.5px;width:135px;height:33px;border:1px solid #4a63ea;border-radius:3px;background:#fff"></div>
<div class="a" style="left:1337px;top:549.5px;width:120px;height:33px;border:1px solid #4a63ea;border-radius:3px;background:#fff"></div>
<div class="a" style="right:285.5px;top:561.00px;font-size:13px;line-height:13px;font-weight:400;color:#555;">1</div>
<div class="a" style="right:125.5px;top:560.00px;font-size:13px;line-height:13px;font-weight:400;color:#333;letter-spacing:-0.2px;">9.000.000 Đ</div>
<div class="a" style="left:1653px;top:554px;width:26px;height:26px;border-radius:50%;background:#fff"></div>
<svg style="left:1659px;top:557.5px" width="16" height="18" viewBox="0 0 16 18"><path d="M7.5 15.8 H4 A3 3 0 0 1 1 12.8 V4 A3 3 0 0 1 4 1 H10.5 A3 3 0 0 1 13.5 4 V8.8" stroke="#3a3a3a" stroke-width="1.3" fill="none"/><path d="M4.5 6 H6.8 M4.5 9 H9.5" stroke="#9a9a9a" stroke-width="1.2"/><path d="M8.5 11.2 L13.6 16.4 M13.6 11.2 L8.5 16.4" stroke="#e4553a" stroke-width="1.4"/></svg>
<div class="a" style="right:285.5px;top:794.00px;font-size:13px;line-height:13px;font-weight:700;color:#222;">1</div>
<div class="a" style="right:125.5px;top:794.00px;font-size:13px;line-height:13px;font-weight:700;color:#222;">9.000.000 Đ</div>
<div class="a" style="left:333.5px;top:838.00px;font-size:13px;line-height:13px;font-weight:400;color:#333;letter-spacing:-0.2px;">Tổng số: </div>
<div class="a" style="left:385.5px;top:838.00px;font-size:13px;line-height:13px;font-weight:700;color:#222;">1</div>
<div class="a" style="left:396px;top:838.00px;font-size:13px;line-height:13px;font-weight:400;color:#333;letter-spacing:-0.2px;">bản ghi</div>
<div class="a" style="left:1445px;top:838.00px;font-size:13px;line-height:13px;font-weight:400;color:#333;letter-spacing:0.1px;">Số dòng/trang</div>
<div class="a" style="left:1539px;top:838.00px;font-size:13px;line-height:13px;font-weight:400;color:#222;">20</div>
<svg style="left:1566.5px;top:840.5px" width="10" height="7" viewBox="0 0 10 7"><path d="M1 1 L5 5 L9 1" stroke="#111" stroke-width="1.8" fill="none"/></svg>
<div class="a" style="left:1609px;top:839.69px;font-size:11px;line-height:11px;font-weight:400;color:#999;">&lt;</div>
<div class="a" style="left:1626.5px;top:838.00px;font-size:13px;line-height:13px;font-weight:400;color:#333;letter-spacing:-0.2px;">Trang</div>
<div class="a" style="left:1674.5px;top:838.00px;font-size:13px;line-height:13px;font-weight:700;color:#222;">1</div>
<div class="a" style="left:1696px;top:839.69px;font-size:11px;line-height:11px;font-weight:400;color:#999;">&gt;</div>
<div class="a" style="left:307px;top:885px;width:1422px;height:50px;background:#fff"></div>
<div class="a" style="left:1582px;top:895px;width:55px;height:31.5px;border:1px solid #cfcfcf;border-radius:4px;background:#fff"></div>
<div class="a" style="left:1598px;top:904.00px;font-size:13px;line-height:13px;font-weight:400;color:#222;letter-spacing:-0.3px;">Hủy</div>
<div class="a" style="left:1649px;top:895px;width:64px;height:31.5px;border-radius:4px;background:#4262ec"></div>
<div class="a" style="left:1670.5px;top:904.00px;font-size:13px;line-height:13px;font-weight:700;color:#fff;letter-spacing:-0.7px;">Lưu</div>
<div class="a" style="left:1713px;top:600px;width:16px;height:337px;background:linear-gradient(90deg,rgba(0,0,0,0) 0%,rgba(0,0,0,0) 30%,rgba(110,110,110,0.4) 100%);-webkit-mask-image:linear-gradient(180deg,transparent 0%,#000 60%)"></div>
<div class="a" style="left:8px;top:252px;width:213px;height:58px;border:3px solid #f43e3e"></div>
<div class="a" style="left:210px;top:296px;width:40px;height:40px;border-radius:50%;background:#f84242"></div>
<div class="a" style="left:210px;top:296px;width:40px;height:40px;text-align:center;font-size:30.5px;line-height:41px;color:#fff">1</div>
<div class="a" style="left:284px;top:163px;width:42px;height:41px;border:3px solid #f43e3e"></div>
<div class="a" style="left:306px;top:129px;width:40px;height:40px;border-radius:50%;background:#f84242"></div>
<div class="a" style="left:306px;top:129px;width:40px;height:40px;text-align:center;font-size:30.5px;line-height:41px;color:#fff">2</div>
<div class="a" style="left:613px;top:46px;width:131px;height:51px;border:3px solid #f43e3e"></div>
<div class="a" style="left:710px;top:77px;width:40px;height:40px;border-radius:50%;background:#f84242"></div>
<div class="a" style="left:710px;top:77px;width:40px;height:40px;text-align:center;font-size:30.5px;line-height:41px;color:#fff">3</div>
<svg style="left:0px;top:0px" width="1731" height="937" viewBox="0 0 1731 937"><path d="M685.3 92.3 L736.3 228.5" stroke="#f43e3e" stroke-width="7" stroke-dasharray="25.6 6.3" fill="none"/><path d="M730.2 212.2 L738 233" stroke="#f43e3e" stroke-width="7"/><path d="M725.5 234.2 L747.2 226 L744.7 251.7 Z" fill="#f43e3e"/></svg>
<div class="a" style="left:996px;top:542px;width:348px;height:50px;border:3px solid #f43e3e"></div>
<div class="a" style="left:1299px;top:573px;width:40px;height:40px;border-radius:50%;background:#f84242"></div>
<div class="a" style="left:1299px;top:573px;width:40px;height:40px;text-align:center;font-size:30.5px;line-height:41px;color:#fff">4</div>
<div class="a" style="left:1639px;top:883px;width:83px;height:53px;border:3px solid #f43e3e"></div>
<div class="a" style="left:1619px;top:863px;width:40px;height:40px;border-radius:50%;background:#f84242"></div>
<div class="a" style="left:1619px;top:863px;width:40px;height:40px;text-align:center;font-size:30.5px;line-height:41px;color:#fff">5</div>

</body></html>
